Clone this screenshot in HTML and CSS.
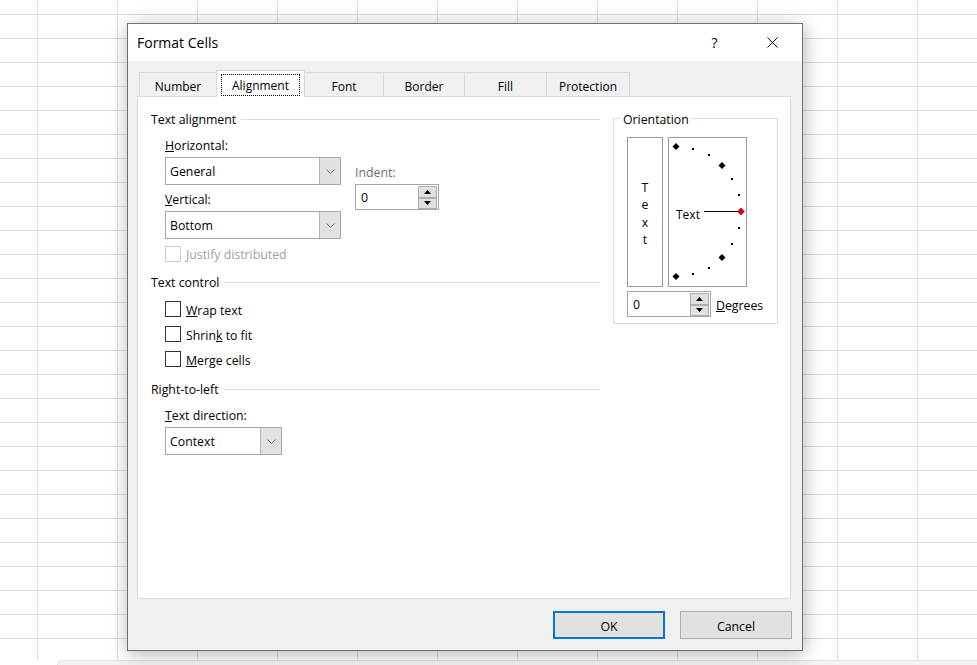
FILE: index.html
```html
<!DOCTYPE html>
<html lang="en">
<head>
<meta charset="utf-8">
<title>Format Cells</title>
<link rel="stylesheet" href="styles.css">
</head>
<body>
<div class="sheet"></div>
<div class="sheetbar"></div>

<div class="dialog">
  <div class="titlebar">
    <span class="title">Format Cells</span>
    <span class="tb-btn help">?</span>
    <span class="tb-btn close"><svg width="11" height="11" viewBox="0 0 11 11"><path d="M0.5 0.5 L10.5 10.5 M10.5 0.5 L0.5 10.5" stroke="#000" stroke-width="1" fill="none"/></svg></span>
  </div>
  <div class="dlg-body">
    <div class="tabs">
      <div class="tab tab-number">Number</div>
      <div class="tab tab-align active"><span class="focus">Alignment</span></div>
      <div class="tab tab-font">Font</div>
      <div class="tab tab-border">Border</div>
      <div class="tab tab-fill">Fill</div>
      <div class="tab tab-prot">Protection</div>
    </div>
    <div class="panel">
      <div class="left">
        <div class="section-head"><span>Text alignment</span><i class="rule"></i></div>
        <div class="align-block">
          <div class="col-main">
            <div class="label"><u>H</u>orizontal:</div>
            <div class="combo combo-first"><span class="combo-val">General</span><span class="combo-btn"><svg width="9" height="5" viewBox="0 0 9 5"><path d="M0.5 0.5 L4.5 4.5 L8.5 0.5" stroke="#707070" fill="none"/></svg></span></div>
            <div class="label lbl-v"><u>V</u>ertical:</div>
            <div class="combo combo-second"><span class="combo-val">Bottom</span><span class="combo-btn"><svg width="9" height="5" viewBox="0 0 9 5"><path d="M0.5 0.5 L4.5 4.5 L8.5 0.5" stroke="#707070" fill="none"/></svg></span></div>
            <div class="check-row disabled justify"><span class="cb"></span><span>Justify distributed</span></div>
          </div>
          <div class="col-indent">
            <div class="label dim">Indent:</div>
            <div class="spin spin-indent">
              <span class="spin-val">0</span>
              <span class="spin-btns">
                <span class="sb"><svg width="7" height="4" viewBox="0 0 7 4"><path d="M0 4 L3.5 0 L7 4Z" fill="#000"/></svg></span>
                <span class="sb"><svg width="7" height="4" viewBox="0 0 7 4"><path d="M0 0 L3.5 4 L7 0Z" fill="#000"/></svg></span>
              </span>
            </div>
          </div>
        </div>

        <div class="section-head sh-control"><span>Text control</span><i class="rule"></i></div>
        <div class="checks">
          <div class="check-row"><span class="cb"></span><span><u>W</u>rap text</span></div>
          <div class="check-row"><span class="cb"></span><span>Shrin<u>k</u> to fit</span></div>
          <div class="check-row"><span class="cb"></span><span><u>M</u>erge cells</span></div>
        </div>

        <div class="section-head sh-rtl"><span>Right-to-left</span><i class="rule"></i></div>
        <div class="rtl-block">
          <div class="label"><u>T</u>ext direction:</div>
          <div class="combo combo-small"><span class="combo-val">Context</span><span class="combo-btn"><svg width="9" height="5" viewBox="0 0 9 5"><path d="M0.5 0.5 L4.5 4.5 L8.5 0.5" stroke="#707070" fill="none"/></svg></span></div>
        </div>
      </div>

      <fieldset class="orient">
        <legend>Orientation</legend>
        <div class="orient-inner">
          <div class="orient-boxes">
            <div class="vtext"><span>T</span><span>e</span><span>x</span><span>t</span></div>
            <div class="dial">
              <svg width="77" height="148" viewBox="0 0 77 148">
                <g fill="#000">
                  <path d="M0 -3.5 L3.5 0 L0 3.5 L-3.5 0Z" transform="translate(7 8.5)"/>
                  <path d="M0 -3.5 L3.5 0 L0 3.5 L-3.5 0Z" transform="translate(53 27.5)"/>
                  <path d="M0 -3.5 L3.5 0 L0 3.5 L-3.5 0Z" transform="translate(53 119.5)"/>
                  <path d="M0 -3.5 L3.5 0 L0 3.5 L-3.5 0Z" transform="translate(7 138.5)"/>
                  <rect x="23" y="10" width="2" height="2"/>
                  <rect x="39" y="16" width="2" height="2"/>
                  <rect x="62" y="40" width="2" height="2"/>
                  <rect x="69" y="56" width="2" height="2"/>
                  <rect x="69" y="89" width="2" height="2"/>
                  <rect x="62" y="105" width="2" height="2"/>
                  <rect x="39" y="129" width="2" height="2"/>
                  <rect x="23" y="135" width="2" height="2"/>
                </g>
                <path d="M35 73.5 H69" stroke="#000" stroke-width="1"/>
                <path d="M0 -3.5 L3.5 0 L0 3.5 L-3.5 0Z" transform="translate(72 73.5)" fill="#e00000" stroke="#900000" stroke-width="0.6"/>
                <text x="7" y="81" class="dial-text">Text</text>
              </svg>
            </div>
          </div>
          <div class="deg-row">
            <div class="spin spin-deg">
              <span class="spin-val">0</span>
              <span class="spin-btns">
                <span class="sb"><svg width="7" height="4" viewBox="0 0 7 4"><path d="M0 4 L3.5 0 L7 4Z" fill="#000"/></svg></span>
                <span class="sb"><svg width="7" height="4" viewBox="0 0 7 4"><path d="M0 0 L3.5 4 L7 0Z" fill="#000"/></svg></span>
              </span>
            </div>
            <span class="deg-label"><u>D</u>egrees</span>
          </div>
        </div>
      </fieldset>
    </div>
    <div class="buttons">
      <button class="btn btn-ok">OK</button>
      <button class="btn">Cancel</button>
    </div>
  </div>
</div>
</body>
</html>
```

FILE: styles.css
```css
* { box-sizing: border-box; }
html, body { margin: 0; padding: 0; }
body {
  width: 977px;
  height: 665px;
  overflow: hidden;
  position: relative;
  background: #fff;
  font-family: "Open Sans", "Noto Sans", sans-serif;
  font-size: 12.3px;
  line-height: 16px;
  color: #000;
}

/* spreadsheet behind the dialog */
.sheet {
  height: 660px;
  background-color: #fff;
  background-image:
    linear-gradient(to right, #dcdcdc 1px, transparent 1px),
    linear-gradient(to bottom, #dcdcdc 1px, transparent 1px);
  background-size: 80px 24px;
  background-position: 37px 14px;
}
.sheetbar {
  margin-left: 57px;
  height: 5px;
  background: #f3f3f3;
  border-top: 1px solid #e1e1e1;
  border-left: 1px solid #e1e1e1;
  border-top-left-radius: 5px;
}

/* dialog window */
.dialog {
  position: absolute;
  left: 127px;
  top: 23px;
  width: 676px;
  height: 628px;
  border: 1px solid #707070;
  background: #f0f0f0;
  box-shadow: 1px 3px 18px rgba(0, 0, 0, 0.3);
  display: flex;
  flex-direction: column;
}
.titlebar {
  flex: none;
  height: 37px;
  background: #fff;
  display: flex;
  align-items: center;
  padding-left: 9px;
}
.title { flex: 1; font-size: 14px; }
.tb-btn {
  height: 100%;
  display: flex;
  align-items: center;
  justify-content: center;
}
.help { width: 55px; font-size: 14px; }
.close { width: 60px; }

.dlg-body {
  flex: 1;
  padding: 11px 11px 0 9px;
  display: flex;
  flex-direction: column;
}

/* tabs */
.tabs {
  display: flex;
  align-items: flex-end;
  height: 24px;
  padding-left: 2px;
}
.tab {
  height: 24px;
  border: 1px solid #d9d9d9;
  border-bottom: 0;
  background: #f0f0f0;
  margin-left: -1px;
  padding-top: 5px;
  display: flex;
  align-items: center;
  justify-content: center;
  font-size: 12px;
}
.tab-number { margin-left: 0; width: 78px; }
.tab-align { width: 89px; }
.tab-font { width: 80px; }
.tab-border { width: 82px; }
.tab-fill { width: 83px; }
.tab-prot { width: 84px; }
.tab.active {
  height: 27px;
  margin-bottom: -1px;
  background: #fff;
  position: relative;
  z-index: 1;
  padding: 0;
  align-items: stretch;
}
.focus {
  flex: 1;
  margin: 3px 4px 1px 4px;
  padding-top: 2px;
  border: 1px dotted #000;
  display: flex;
  align-items: center;
  justify-content: center;
}

/* content panel */
.panel {
  height: 503px;
  border: 1px solid #d9d9d9;
  background: #fff;
  display: flex;
  align-items: flex-start;
  padding: 14px 0 0 13px;
}
.left { width: 449px; flex: none; }

.section-head {
  display: flex;
  align-items: center;
  height: 16px;
}
.section-head span { padding-top: 2px; }
.section-head .rule {
  flex: 1;
  height: 1px;
  background: #dcdcdc;
  margin-left: 5px;
}
.sh-control { margin-top: 12px; }
.sh-rtl { margin-top: 14px; }

.label { height: 16px; padding-top: 1px; white-space: nowrap; }
.dim { color: #6d6d6d; }

.align-block {
  display: flex;
  align-items: flex-start;
  padding-left: 14px;
  margin-top: 10px;
}
.col-main { width: 176px; }
.col-indent { margin-left: 14px; }
.col-indent .label { margin-top: 27px; }

.combo {
  display: flex;
  align-items: stretch;
  height: 28px;
  border: 1px solid #a7a7a7;
  background: #fff;
}
.combo-first { margin-top: 4px; }
.lbl-v { margin-top: 6px; }
.combo-second { margin-top: 4px; }
.combo-val {
  flex: 1;
  padding: 2px 0 0 4px;
  display: flex;
  align-items: center;
}
.combo-btn {
  width: 21px;
  background: #e1e1e1;
  border-left: 1px solid #b4b4b4;
  display: flex;
  align-items: center;
  justify-content: center;
}

.spin {
  display: flex;
  align-items: stretch;
  border: 1px solid #a7a7a7;
  background: #fff;
}
.spin-indent { width: 84px; height: 26px; margin-top: 4px; }
.spin-val {
  flex: 1;
  padding: 2px 0 0 5px;
  display: flex;
  align-items: center;
}
.spin-btns {
  width: 20px;
  padding: 1px 1px 0 0;
  display: flex;
  flex-direction: column;
}
.sb {
  flex: 1;
  border: 1px solid #adadad;
  background: #e1e1e1;
  display: flex;
  align-items: center;
  justify-content: center;
}

.check-row {
  display: flex;
  align-items: center;
  height: 16px;
  white-space: nowrap;
}
.check-row .cb {
  width: 16px;
  height: 16px;
  border: 1px solid #333;
  background: #fff;
  margin-right: 5px;
  flex: none;
}
.check-row span + span { padding-top: 4px; }
.justify { margin-top: 7px; }
.justify span + span { padding-top: 2px; }
.disabled { color: #a0a0a0; }
.disabled .cb { border-color: #cccccc; }

.checks {
  margin-top: 11px;
  padding-left: 14px;
  display: flex;
  flex-direction: column;
  gap: 9px;
}

.rtl-block { padding-left: 14px; margin-top: 10px; }
.combo-small { width: 117px; margin-top: 4px; }

/* orientation group */
.orient {
  margin: -3px 0 0 13px;
  padding: 0;
  width: 165px;
  min-width: 0;
  border: 1px solid #dcdcdc;
}
.orient legend {
  padding: 4px 2px 0 2px;
  margin-left: 7px;
  line-height: 16px;
}
.orient-inner { padding: 9px 0 6px 13px; }
.orient-boxes {
  display: flex;
  gap: 5px;
  height: 150px;
}
.vtext {
  width: 36px;
  border: 1px solid #9b9b9b;
  display: flex;
  flex-direction: column;
  align-items: center;
  justify-content: center;
  line-height: 17.5px;
  padding-top: 3px;
}
.dial {
  width: 79px;
  border: 1px solid #9b9b9b;
}
.dial svg { display: block; }
.dial-text {
  font-family: "Open Sans", "Noto Sans", sans-serif;
  font-size: 12px;
  fill: #000;
}
.deg-row {
  display: flex;
  align-items: center;
  margin-top: 4px;
}
.spin-deg { width: 84px; height: 26px; }
.deg-label { margin-left: 5px; padding-top: 4px; }

/* buttons */
.buttons {
  display: flex;
  justify-content: flex-end;
  gap: 15px;
  margin-top: 12px;
  margin-right: -1px;
}
.btn {
  width: 112px;
  height: 28px;
  padding: 4px 0 0;
  font: inherit;
  color: #000;
  background: #e1e1e1;
  border: 1px solid #adadad;
}
.btn-ok { border: 2px solid #0078d7; }
```
